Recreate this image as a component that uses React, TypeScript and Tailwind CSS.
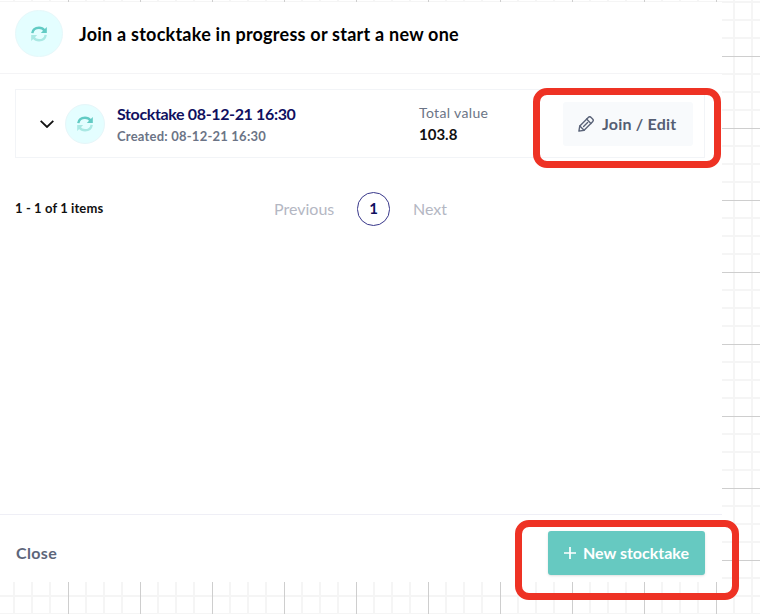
import React from "react";

function Grid() {
  return (
    <svg className="absolute inset-0 h-full w-full" shapeRendering="crispEdges" aria-hidden="true">
      <defs>
        <pattern id="grid" x="68" y="56" width="72" height="72" patternUnits="userSpaceOnUse">
          <path
            fill="#f5f5f5"
            d="M17 0h2v72h-2zM35 0h2v72h-2zM53 0h2v72h-2zM0 17h72v2H0zM0 35h72v2H0zM0 53h72v2H0z"
          />
          <path fill="#cecece" d="M0 0h1v72H0zM0 0h72v1H0z" />
        </pattern>
      </defs>
      <rect width="100%" height="100%" fill="url(#grid)" />
    </svg>
  );
}

function SyncIcon({ className }: { className: string }) {
  return (
    <svg viewBox="0 0 16 16" className={className} aria-hidden="true">
      <g fill="none" strokeWidth="2.4">
        <path d="M1.3 7.2C1.8 3.8 4.6 1.7 8 1.7c2.2 0 4.2 1 5.5 2.8" stroke="#62cbc4" />
        <path d="M14.7 8.8c-.5 3.4-3.3 5.5-6.7 5.5-2.2 0-4.2-1-5.5-2.8" stroke="#a9e8e3" />
      </g>
      <path d="M15.8 1v6H9.8z" fill="#62cbc4" />
      <path d="M.2 15V9h6z" fill="#a9e8e3" />
    </svg>
  );
}

function PencilIcon() {
  return (
    <svg
      viewBox="0 0 16 16"
      className="h-4 w-4"
      fill="none"
      stroke="#5b6479"
      strokeWidth="1.4"
      strokeLinejoin="round"
      strokeLinecap="round"
      aria-hidden="true"
    >
      <path d="M.9 15.1l.9-5.2L10.3 1.4a2 2 0 0 1 2.8 0l1.5 1.5a2 2 0 0 1 0 2.8L6.1 14.2z" />
      <path d="M8.6 3.1l4.3 4.3M1.8 9.9l4.3 4.3M5.6 10.4l4-4" />
    </svg>
  );
}

export default function App() {
  return (
    <div className="relative h-[614px] w-[760px] overflow-hidden bg-white pt-[2px] font-['Lato','Noto_Sans',sans-serif] whitespace-nowrap">
      <Grid />
      <main className="relative flex h-[580px] w-[722px] flex-col bg-white">
        <header className="flex h-[72px] shrink-0 items-start border-b border-[#f4f4f6] pt-2 pl-[15px]">
          <div className="flex h-[47px] w-12 items-center justify-center rounded-full border border-[#e6f8fa] bg-[#e4feff]">
            <SyncIcon className="h-4 w-4" />
          </div>
          <h1 className="ml-4 pt-3 text-[18px] leading-6 font-bold tracking-[0.24px] text-black">
            Join a stocktake in progress or start a new one
          </h1>
        </header>

        <section className="mt-[15px] ml-[15px] flex h-[69px] w-[690px] shrink-0 items-center border border-[#f2f4f7] pr-[11px]">
          <svg viewBox="0 0 14 8" className="ml-6 h-2 w-[14px]" fill="none" stroke="#111" strokeWidth="1.8" aria-hidden="true">
            <path d="M.7.8L7 7 13.3.8" />
          </svg>
          <div className="ml-[11px] flex h-10 w-10 items-center justify-center rounded-full border border-[#e6f6f9] bg-[#e4feff]">
            <SyncIcon className="h-4 w-4" />
          </div>
          <div className="ml-3 w-[302px] pt-[3px]">
            <div className="text-[16px] leading-[22px] font-bold tracking-[-0.36px] text-[#10105f]">
              Stocktake 08-12-21 16:30
            </div>
            <div className="text-[13px] leading-[22px] font-bold tracking-[0.22px] text-[#6b7486]">
              Created: 08-12-21 16:30
            </div>
          </div>
          <div>
            <div className="text-[14px] leading-[21px] tracking-[0.35px] text-[#6b7486]">Total value</div>
            <div className="text-[15px] leading-[22px] font-bold text-[#111]">103.8</div>
          </div>
          <button className="ml-auto flex h-11 w-[130px] items-center gap-2 rounded-[3px] bg-[#f8fafc] pl-[15px] text-[16px] font-bold tracking-[0.2px] text-[#555e73]">
            <PencilIcon />
            <span>Join / Edit</span>
          </button>
        </section>

        <nav className="mt-[33px] ml-[15px] flex h-[35px] shrink-0 items-center">
          <div className="w-[259px] pt-px text-[13px] font-bold tracking-[0.1px] text-[#111]">1 - 1 of 1 items</div>
          <div className="w-[83px] pt-px text-[16px] text-[#b4b7c3]">Previous</div>
          <div className="flex h-[34px] w-[33px] items-center justify-center rounded-full border border-[#38378a] text-[15px] font-bold text-[#10105f]">
            1
          </div>
          <div className="ml-[23px] pt-px text-[16px] text-[#b4b7c3]">Next</div>
        </nav>

        <footer className="mt-auto flex h-[68px] shrink-0 items-start justify-between border-t border-[#efeff6] pt-4 pr-[17px] pl-4">
          <button className="h-11 text-[16px] font-bold tracking-[0.35px] text-[#5d667a]">Close</button>
          <button className="flex h-11 w-[157px] items-center gap-[7px] rounded-[3px] bg-[#66c9c1] pl-4 text-[16px] font-bold text-white shadow-sm">
            <svg viewBox="0 0 12 12" className="h-3 w-3" stroke="white" strokeWidth="1.7" aria-hidden="true">
              <path d="M6 0v12M0 6h12" />
            </svg>
            <span>New stocktake</span>
          </button>
        </footer>
      </main>
      <div className="absolute top-[88px] left-[533px] h-20 w-[188px] rounded-[14px] border-[7px] border-[#ee3224]" />
      <div className="absolute top-[520px] left-[515px] h-20 w-[224px] rounded-[14px] border-[7px] border-[#ee3224]" />
    </div>
  );
}
